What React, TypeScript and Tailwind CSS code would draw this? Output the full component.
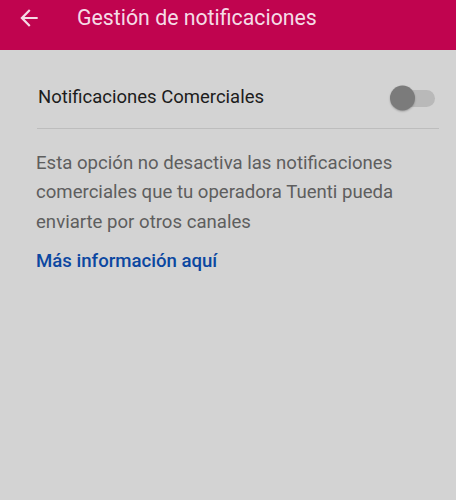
export default function App() {
  return (
    <div className="h-[500px] w-[456px] overflow-hidden bg-[#d3d3d3] font-['Roboto',sans-serif]">
      <header className="flex h-[50px] items-start bg-[#c0044f] pt-[1px]">
        <div className="flex h-[33px] w-[77px] items-center pl-[16px]">
          <svg width="26" height="26" viewBox="0 0 24 24" className="text-[#f5dbe6]">
            <path
              d="M20 11H7.83l5.59-5.59L12 4l-8 8 8 8 1.41-1.41L7.83 13H20v-2z"
              fill="currentColor"
            />
          </svg>
        </div>
        <h1 className="text-[21.3px] leading-[33px] text-[#f5dbe6]">Gestión de notificaciones</h1>
      </header>

      <div className="pl-[37px] pr-[17px] pt-[18px]">
        <div className="flex h-[61px] items-center justify-between border-b border-[#bdbdbd] pr-[4px]">
          <span className="pl-[1px] text-[18.5px] text-[#1c1c1c]">Notificaciones Comerciales</span>
          <div className="relative h-[17px] w-[44px] rounded-full bg-[#b9b9b9]">
            <span className="absolute left-[-1px] top-1/2 h-[25px] w-[25px] -translate-y-1/2 rounded-full bg-[#7b7b7b] shadow-[0_1px_2px_rgba(0,0,0,0.25)]" />
          </div>
        </div>
      </div>

      <div className="pl-[36px] pr-[30px] pt-[20px]">
        <p className="text-[18.6px] leading-[29.3px] text-[#5e5e5e]">
          Esta opción no desactiva las notificaciones comerciales que tu operadora Tuenti pueda
          enviarte por otros canales
        </p>
        <a className="mt-[10px] block text-[18.6px] font-medium leading-[29.3px] text-[#0b47a1]">
          Más información aquí
        </a>
      </div>
    </div>
  );
}
